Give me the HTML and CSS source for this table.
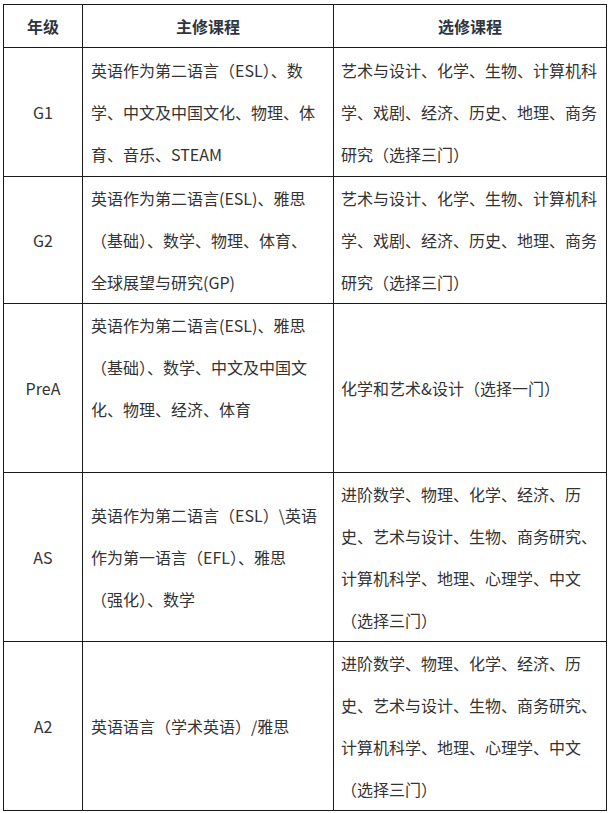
FILE: index.html
```html
<!DOCTYPE html>
<html lang="zh-CN">
<head>
<meta charset="utf-8">
<title>课程设置</title>
<link rel="stylesheet" href="styles.css">
</head>
<body>
<table class="course-table">
  <colgroup>
    <col class="col-grade">
    <col class="col-main">
    <col class="col-elective">
  </colgroup>
  <thead>
    <tr class="row-head">
      <th>年级</th>
      <th>主修课程</th>
      <th>选修课程</th>
    </tr>
  </thead>
  <tbody>
    <tr class="row-g1">
      <td class="grade">G1</td>
      <td>英语作为第二语言（ESL）、数<br>学、中文及中国文化、物理、体<br>育、音乐、STEAM</td>
      <td>艺术与设计、化学、生物、计算机科<br>学、戏剧、经济、历史、地理、商务<br>研究（选择三门）</td>
    </tr>
    <tr class="row-g2">
      <td class="grade">G2</td>
      <td>英语作为第二语言(ESL)、雅思<br>（基础）、数学、物理、体育、<br>全球展望与研究(GP)</td>
      <td>艺术与设计、化学、生物、计算机科<br>学、戏剧、经济、历史、地理、商务<br>研究（选择三门）</td>
    </tr>
    <tr class="row-tall">
      <td class="grade">PreA</td>
      <td class="cell-top">英语作为第二语言(ESL)、雅思<br>（基础）、数学、中文及中国文<br>化、物理、经济、体育</td>
      <td>化学和艺术&amp;设计（选择一门）</td>
    </tr>
    <tr class="row-tall">
      <td class="grade">AS</td>
      <td>英语作为第二语言（ESL）\英语<br>作为第一语言（EFL）、雅思<br>（强化）、数学</td>
      <td>进阶数学、物理、化学、经济、历<br>史、艺术与设计、生物、商务研究、<br>计算机科学、地理、心理学、中文<br>（选择三门）</td>
    </tr>
    <tr class="row-tall">
      <td class="grade">A2</td>
      <td>英语语言（学术英语）/雅思</td>
      <td>进阶数学、物理、化学、经济、历<br>史、艺术与设计、生物、商务研究、<br>计算机科学、地理、心理学、中文<br>（选择三门）</td>
    </tr>
  </tbody>
</table>
</body>
</html>
```
FILE: styles.css
```css
html, body {
  margin: 0;
  padding: 0;
  background: #ffffff;
}

body {
  font-family: "Noto Sans CJK SC", "Noto Sans", sans-serif;
  font-size: 16px;
  color: #333333;
}

.course-table {
  border-collapse: collapse;
  table-layout: fixed;
  width: 603px;
  margin: 4px 0 0 3px;
}

.col-grade { width: 79px; }
.col-main { width: 251px; }
.col-elective { width: 273px; }

.course-table th,
.course-table td {
  border: 1px solid #1a1a1a;
  line-height: 42px;
  padding: 0 7px;
  vertical-align: middle;
  text-align: left;
}

.course-table td:nth-child(2) {
  padding-left: 8px;
}

.course-table th {
  font-weight: bold;
  text-align: center;
  color: #2f3540;
}

.course-table td.grade {
  text-align: center;
  padding: 0;
}

.course-table td.cell-top {
  vertical-align: top;
}

.row-head { height: 43px; }
.row-g1 { height: 129px; }
.row-g2 { height: 125px; }
.row-tall { height: 169px; }
```
